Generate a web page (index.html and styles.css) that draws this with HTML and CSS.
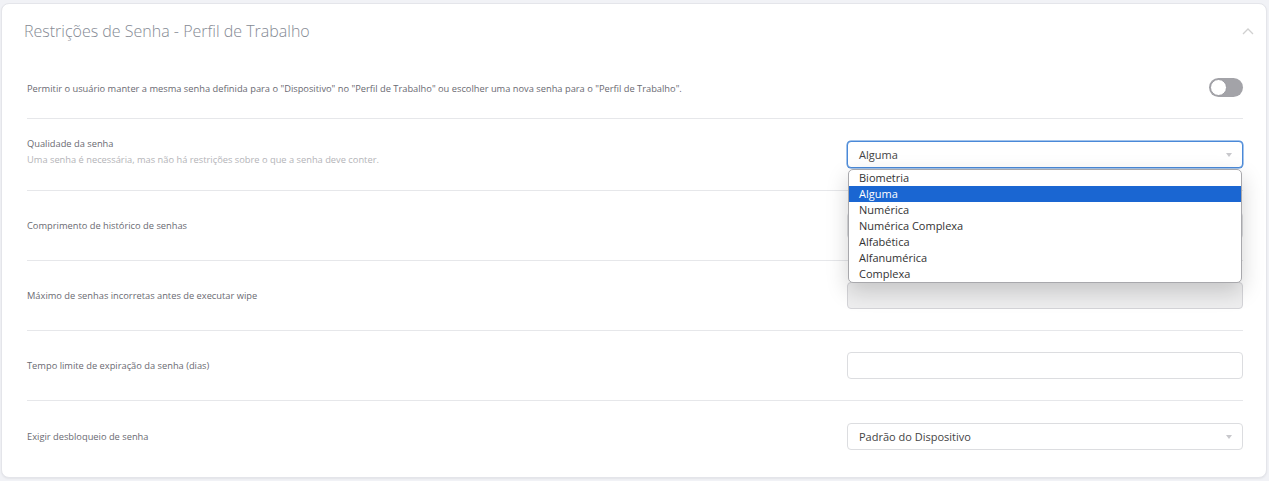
FILE: index.html
```html
<!DOCTYPE html>
<html lang="pt-BR">
<head>
<meta charset="utf-8">
<title>Restrições de Senha</title>
<link rel="stylesheet" href="styles.css">
</head>
<body>
<div class="card">
  <div class="card-header">
    <h2 class="title">Restrições de Senha - Perfil de Trabalho</h2>
    <svg class="chevron" width="12" height="8" viewBox="0 0 12 8"><path d="M1 7 L6 2 L11 7" fill="none" stroke="#d0d0d0" stroke-width="1.3"/></svg>
  </div>
  <div class="card-body">
    <div class="row row-first">
      <div class="label">Permitir o usuário manter a mesma senha definida para o "Dispositivo" no "Perfil de Trabalho" ou escolher uma nova senha para o "Perfil de Trabalho".</div>
      <div class="toggle"><span class="knob"></span></div>
    </div>
    <div class="row row-tall">
      <div class="label-group">
        <div class="label">Qualidade da senha</div>
        <div class="desc">Uma senha é necessária, mas não há restrições sobre o que a senha deve conter.</div>
      </div>
      <div class="control">
        <div class="select focused"><span>Alguma</span><span class="arrow"></span></div>
        <ul class="listbox">
          <li>Biometria</li>
          <li class="active">Alguma</li>
          <li>Numérica</li>
          <li>Numérica Complexa</li>
          <li>Alfabética</li>
          <li>Alfanumérica</li>
          <li>Complexa</li>
        </ul>
      </div>
    </div>
    <div class="row">
      <div class="label">Comprimento de histórico de senhas</div>
      <div class="control"><div class="input"></div></div>
    </div>
    <div class="row">
      <div class="label">Máximo de senhas incorretas antes de executar wipe</div>
      <div class="control"><div class="input disabled"></div></div>
    </div>
    <div class="row">
      <div class="label">Tempo limite de expiração da senha (dias)</div>
      <div class="control"><div class="input"></div></div>
    </div>
    <div class="row row-last">
      <div class="label">Exigir desbloqueio de senha</div>
      <div class="control"><div class="select"><span>Padrão do Dispositivo</span><span class="arrow"></span></div></div>
    </div>
  </div>
</div>
</body>
</html>
```

FILE: styles.css
```css
* { box-sizing: border-box; }
html, body { margin: 0; }
body {
  background: #f1f2f6;
  padding: 3px 2px 3px 1px;
  font-family: "Open Sans", "Liberation Sans", sans-serif;
  color: #666;
}
.card {
  background: #fff;
  border: 1px solid #e4e5ea;
  border-radius: 8px;
  box-shadow: 0 1px 2px rgba(0,0,0,0.06);
  height: 475px;
  padding-bottom: 6px;
}
.card-header {
  display: flex;
  align-items: center;
  justify-content: space-between;
  height: 54px;
  padding: 0 12px 0 22px;
}
.title {
  margin: 0 0 1px 0;
  font-size: 16px;
  font-weight: 300;
  color: #858a94;
}
.card-body {
  padding: 0 23px 0 25px;
}
.row {
  display: flex;
  align-items: center;
  justify-content: space-between;
  height: 70px;
  border-bottom: 1px solid #e6e7ea;
}
.row-first { height: 61px; }
.row-tall { height: 72px; }
.row-last { border-bottom: none; height: 70px; }
.label {
  font-size: 9.3px;
  color: #6a6a72;
}
.desc {
  font-size: 9.3px;
  color: #b4b4b8;
  margin-top: 3px;
}
.label-group { margin-top: -6px; }
.toggle {
  width: 34px;
  height: 19px;
  border-radius: 10px;
  background: #a3a3a8;
  position: relative;
  margin-top: -2px;
}
.knob {
  position: absolute;
  left: 1px;
  top: 1px;
  width: 17px;
  height: 17px;
  border-radius: 50%;
  background: #fff;
  border: 1px solid #9a9aa0;
}
.control {
  width: 396px;
  position: relative;
}
.select, .input {
  height: 27px;
  border: 1px solid #dcdde0;
  border-radius: 4px;
  background: #fff;
  display: flex;
  align-items: center;
  justify-content: space-between;
  padding: 0 10px 0 11px;
  font-size: 11px;
  color: #444;
}
.select.focused {
  border-color: #4a89d8;
  box-shadow: 0 0 0 0.5px #4a89d8;
}
.input.disabled {
  background: #eeeeef;
  border-color: #d4d4d8;
}
.arrow {
  width: 0; height: 0;
  border-left: 3.5px solid transparent;
  border-right: 3.5px solid transparent;
  border-top: 4px solid #c8c8cc;
  margin-top: 1px;
}
.listbox {
  position: absolute;
  top: 28px;
  left: 1px;
  width: 394px;
  margin: 0;
  padding: 0;
  list-style: none;
  background: #fff;
  border: 1px solid #a8a8ac;
  border-radius: 5px;
  box-shadow: 0 8px 22px rgba(0,0,0,0.18);
  z-index: 5;
  overflow: hidden;
}
.listbox li {
  height: 16px;
  line-height: 16px;
  font-size: 11px;
  padding-left: 10px;
  color: #333;
}
.listbox li.active {
  background: #1a66d2;
  color: #fff;
}
```
